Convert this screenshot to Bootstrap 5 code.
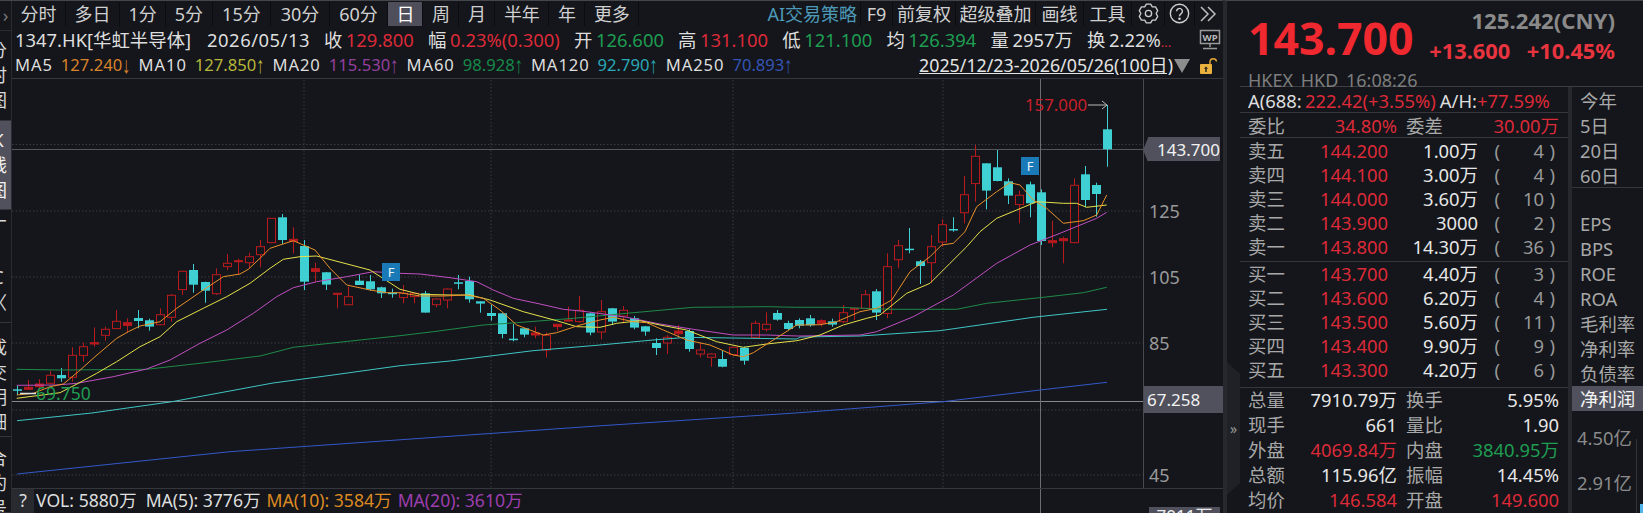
<!doctype html>
<html lang="zh">
<head>
<meta charset="utf-8">
<title>1347.HK 华虹半导体</title>
<link href="https://cdn.jsdelivr.net/npm/bootstrap@5.3.0/dist/css/bootstrap.min.css" rel="stylesheet">
<style>
:root{--bg:#14161b;--line:#35373d;--sep:#0b0c0f;--red:#dc2a38;--green:#1f9d52;--txt:#dedede;--mut:#a6a6a6;}
html,body{margin:0;height:513px;width:1643px;overflow:hidden;background:var(--bg);}
body{font-family:"Noto Sans","Noto Sans CJK SC",sans-serif;font-size:18.4px;line-height:1;color:var(--txt);}
.app{width:1643px;height:513px;overflow:hidden;}
.left-col{width:1223px;border-top:1px solid #44464c;}
.strip{width:12px;flex:none;border-right:1px solid #2a2c31;overflow:hidden;}
.strip-top{height:30px;border-bottom:1px solid #2a2c31;color:#777;}
.vtab{width:11px;overflow:hidden;border-bottom:1px solid #33353a;position:relative;color:#d8d8d8;font-size:18px;}
.vtab span{display:block;width:18px;margin-left:-11px;height:25px;line-height:25px;text-align:center;}
.vtab.on{background:#50515c;color:#f0f0f0;}
.v1{height:90px;padding-top:7px;} .v2{height:89px;padding-top:7px;} .v3{height:114px;padding-top:5px;} .v4{height:114px;padding-top:12px;} .v5{height:76px;padding-top:9px;}
.chart-col{width:1211px;}
.toolbar{height:26px;font-size:18px;}
.toolbar .tb{padding:0 8.5px;height:24px;line-height:24px;border-right:1px solid var(--sep);color:#d0d0d0;white-space:nowrap;}
.toolbar .tb.x{padding:0 9.5px;}
.toolbar .tb.on{background:#4e4f5a;color:#fff;padding:0 8px;}
.toolbar .tb.ai{color:#4c9ab8;padding:0 3px 0 0;}
.toolbar .tb.tr{padding:0;text-align:center;}
.t32{width:32px;} .t63{width:63px;} .t80{width:80px;} .t48{width:48px;} .t33{width:33px;} .t30{width:30px;} .t28{width:28px;}
.toolbar .tb.ic{padding:0;justify-content:center;}
.info{height:27px;white-space:nowrap;padding-left:3px;}
.info .g{margin-right:14.2px;}
.info b{font-weight:400;margin-left:3.5px;}
.info .date{letter-spacing:.5px;margin-right:14px;}
.mrow{height:26px;border-bottom:1px solid var(--line);font-size:16.6px;white-space:nowrap;padding-left:3px;}
.mrow .n{letter-spacing:.9px;}
.mrow .v{margin:0 8px;}
.ar{font-family:"Liberation Sans",sans-serif;display:inline-block;transform:scaleY(1.4);}
.range{font-size:17.8px;text-decoration:underline;color:#e4e4e4;}
.chart{height:409px;position:relative;}
.chart svg{display:block;}
.chart text{font-family:"Noto Sans","Noto Sans CJK SC",sans-serif;}
.pbadge{position:absolute;background:#50515c;color:#f2f2f2;display:flex;align-items:center;font-size:17px;}
.vol{height:25px;position:relative;border-top:1px solid var(--line);font-size:17.6px;white-space:nowrap;}
.vol .q{width:22px;background:#282a2f;height:24px;color:#ddd;}
.vol .vt{margin-left:2px;}
.vol .vg{margin-left:6px;}
.cross{position:absolute;left:1028px;top:0;bottom:0;width:1px;background:#6c6d72;}
.vbadge{position:absolute;left:1137px;width:71px;top:18px;height:10px;background:#50515c;color:#eee;text-align:center;font-size:17px;overflow:hidden;}
.right{width:420px;border-left:4px solid #26282d;border-top:1px solid #44464c;}
.handle-col{width:13px;flex:none;position:relative;}
.handle{position:absolute;left:0;top:361px;width:13px;height:133px;background:#1f2126;clip-path:polygon(0 0,100% 9%,100% 91%,0 100%);color:#9a9a9a;font-size:14px;}
.quote{width:403px;}
.head{height:86px;border-bottom:1px solid #3c3e44;padding-left:8px;}
.big{font-size:44.6px;font-weight:700;color:#f0282f;line-height:44px;margin-top:15px;}
.head-r{padding-right:28px;padding-top:9px;font-weight:700;}
.cny{font-size:22.2px;color:#8a8a8a;}
.chg{font-size:21.8px;color:#e8343f;margin-top:8px;word-spacing:11px;}
.ex{font-size:18px;color:#7e7e7e;height:20px;line-height:28px;margin-top:auto;word-spacing:3px;white-space:nowrap;}
.book{width:332px;flex:none;border-right:4px solid #26282d;}
.a-row{height:26px;border-bottom:1px solid var(--line);padding-left:8px;padding-top:3px;white-space:nowrap;font-size:18.4px;}
.a-row .clip{width:57px;overflow:hidden;flex:none;}
.stat{display:grid;grid-template-columns:60px 89px 9px 52px 101px;padding-left:8px;align-items:center;height:25px;}
.stat>:nth-child(2){text-align:right;}
.stat>:nth-child(4){grid-column:4;}
.stat>:nth-child(5){text-align:right;}
.lb{color:#a8a8a8;}
.bk{display:grid;grid-template-columns:60px 80px 90px 22px 44px 11px;padding-left:8px;align-items:center;height:24px;}
.bk>:nth-child(2),.bk>:nth-child(3),.bk>:nth-child(5),.bk>:nth-child(6){text-align:right;}
.bk>:nth-child(4),.bk>:nth-child(5),.bk>:nth-child(6){color:#999;}
.bk>:nth-child(4){text-align:right;}
.red{color:var(--red);} .green{color:var(--green);} .w{color:#e6e6e6;}
.sec{border-bottom:1px solid var(--line);}
.wei{height:25px;padding-top:3px;}
.s5{height:124px;padding-top:1px;}
.b5{height:126px;}
.side{width:71px;flex:none;color:#a8a8a8;position:relative;}
.side .it{height:25px;line-height:25px;padding-left:8px;white-space:nowrap;}
.side .it.on{background:#50515c;color:#f4f4f4;}
.side .top{padding-top:1px;height:101px;border-bottom:1px solid var(--line);margin-bottom:23px;}
.side .yi{color:#8a8a8a;padding-left:5px;height:45px;line-height:45px;}
.yaxis{position:absolute;left:64px;top:352px;bottom:0;width:1px;background:#33353a;}
.tick{position:absolute;right:0;bottom:0;width:3px;height:9px;background:#4fb4ea;}
.wp{margin-right:2px;}
</style>
</head>
<body>
<div class="app d-flex">
  <div class="left-col d-flex">
    <div class="strip d-flex flex-column">
      <div class="strip-top d-flex align-items-center justify-content-center">›</div>
      <div class="vtab v1"><span>分</span><span>时</span><span>图</span></div>
      <div class="vtab v2 on"><span>K</span><span>线</span><span>图</span></div>
      <div class="vtab v3"><span>丁</span><span>&nbsp;</span><span>C</span><span>〈</span></div>
      <div class="vtab v4"><span>成</span><span>交</span><span>明</span><span>细</span></div>
      <div class="vtab v5"><span>合</span><span>约</span><span>号</span></div>
    </div>
    <div class="chart-col d-flex flex-column">
      <div class="toolbar d-flex align-items-center">
        <div class="tb">分时</div><div class="tb">多日</div><div class="tb">1分</div><div class="tb">5分</div><div class="tb x">15分</div><div class="tb x">30分</div><div class="tb x">60分</div><div class="tb on">日</div><div class="tb">周</div><div class="tb">月</div><div class="tb">半年</div><div class="tb">年</div><div class="tb">更多</div>
        <div class="tb ai ms-auto">AI交易策略</div><div class="tb tr t32">F9</div><div class="tb tr t63">前复权</div><div class="tb tr t80">超级叠加</div><div class="tb tr t48">画线</div><div class="tb tr t48">工具</div>
        <div class="tb ic t33 d-flex align-items-center">
          <svg width="21" height="21" viewBox="0 0 24 24" fill="none" stroke="#cfcfcf" stroke-width="1.500" stroke-linejoin="round"><circle cx="12" cy="12" r="3.600"/><path d="M14.470 1.280L16.350 4.470 20.040 4.500 22.520 8.780 20.700 12 22.520 15.220 20.040 19.500 16.350 19.530 14.470 22.720 9.530 22.720 7.650 19.530 3.960 19.500 1.480 15.220 3.300 12 1.480 8.780 3.960 4.500 7.650 4.470 9.530 1.280z"/></svg>
        </div>
        <div class="tb ic t30 d-flex align-items-center">
          <svg width="21" height="21" viewBox="0 0 24 24" fill="none" stroke="#cfcfcf" stroke-width="1.600"><circle cx="12" cy="12" r="10.500"/><path d="M8.700 9.500a3.300 3.300 0 1 1 5.200 2.700c-1.300.9-1.900 1.500-1.900 3"/><circle cx="12" cy="18" r=".7" fill="#cfcfcf"/></svg>
        </div>
        <div class="tb ic t28 d-flex align-items-center border-0">
          <svg width="18" height="16" viewBox="0 0 18 16" fill="none" stroke="#bdbdbd" stroke-width="1.500"><path d="M1 1l7 7-7 7M8 1l7 7-7 7"/></svg>
        </div>
      </div>
      <div class="info d-flex align-items-center">
        <span class="g" style="margin-right:16px">1347.HK[华虹半导体]</span><span class="g date">2026/05/13</span>
        <span class="g">收<b class="red">129.800</b></span><span class="g">幅<b class="red">0.23%(0.300)</b></span><span class="g">开<b class="green">126.600</b></span><span class="g">高<b class="red">131.100</b></span><span class="g">低<b class="green">121.100</b></span><span class="g">均<b class="green">126.394</b></span><span class="g">量<b>2957万</b></span><span>换<b>2.22%</b><span class="red" style="font-size:13px">...</span></span>
        <svg class="ms-auto wp" width="22" height="22" viewBox="0 0 22 22"><rect x="1.500" y="1.500" width="19" height="13" fill="none" stroke="#9a9a9a" stroke-width="1.500"/><text x="11" y="12" text-anchor="middle" font-size="9.500" font-weight="700" fill="#b8b8b8" font-family="Noto Sans">WP</text><path d="M11 15v3M4 19.500h14" stroke="#9a9a9a" stroke-width="1.500"/></svg>
      </div>
      <div class="mrow d-flex align-items-center">
        <span class="n">MA5</span><span class="v" style="color:#d9832a">127.240<span class="ar">↓</span></span>
        <span class="n">MA10</span><span class="v" style="color:#b8b83a">127.850<span class="ar">↑</span></span>
        <span class="n">MA20</span><span class="v" style="color:#93409f">115.530<span class="ar">↑</span></span>
        <span class="n">MA60</span><span class="v" style="color:#178a4a">98.928<span class="ar">↑</span></span>
        <span class="n">MA120</span><span class="v" style="color:#2aa8b8">92.790<span class="ar">↑</span></span>
        <span class="n">MA250</span><span class="v" style="color:#3555b5">70.893<span class="ar">↑</span></span>
        <span class="range ms-auto">2025/12/23-2026/05/26(100日)</span>
        <svg width="18" height="16" viewBox="0 0 18 16"><path d="M1 1h16L9 15z" fill="#8d8d8d"/></svg>
        <svg class="ms-2 me-1" width="20" height="20" viewBox="0 0 20 20"><path d="M11 8V5.500a3.300 3.300 0 0 1 6.500 0" fill="none" stroke="#e6a83a" stroke-width="1.400"/><rect x="1" y="8" width="12" height="10" rx="1" fill="#eab13c"/><path d="M7 10.500l-2 2.300h1.300V16h1.400v-3.200H9z" fill="#222"/></svg>
      </div>
      <div class="chart" id="chart">
        <div class="pbadge" style="left:1136px;top:58px;width:72px;height:24px;padding-left:9px;">143.700</div>
        <div class="pbadge" style="left:1132px;top:307px;width:79px;height:27px;padding-left:3px;">67.258</div>
      </div>
      <div class="vol d-flex align-items-center">
        <div class="q d-flex align-items-center justify-content-center">?</div>
        <span class="vt">VOL: 5880万&nbsp; MA(5): 3776万</span>
        <span class="vg" style="color:#dd8a22">MA(10): 3584万</span>
        <span class="vg" style="color:#9d3eae">MA(20): 3610万</span>
        <div class="cross"></div>
        <div class="vbadge">7011万</div>
      </div>
    </div>
  </div>
  <div class="right d-flex">
    <div class="handle-col"><div class="handle d-flex align-items-center justify-content-center">»</div></div>
    <div class="quote d-flex flex-column">
      <div class="head d-flex flex-column">
        <div class="d-flex">
          <div class="big">143.700</div>
          <div class="head-r ms-auto text-end">
            <div class="cny">125.242(CNY)</div>
            <div class="chg">+13.600 +10.45%</div>
          </div>
        </div>
        <div class="ex">HKEX HKD 16:08:26</div>
      </div>
      <div class="d-flex flex-grow-1">
        <div class="book">
          <div class="a-row d-flex align-items-center"><span class="clip">A(688:</span><span class="red">222.42(+3.55%)</span><span class="ms-1">A/H:</span><span class="red">+77.59%</span></div>
          <div class="stat sec wei"><span class="lb">委比</span><span class="red">34.80%</span><span></span><span class="lb">委差</span><span class="red">30.00万</span></div>
          <div class="sec s5">
            <div class="bk"><span class="lb">卖五</span><span class="red">144.200</span><span class="w">1.00万</span><span>(</span><span>4</span><span>)</span></div>
            <div class="bk"><span class="lb">卖四</span><span class="red">144.100</span><span class="w">3.00万</span><span>(</span><span>4</span><span>)</span></div>
            <div class="bk"><span class="lb">卖三</span><span class="red">144.000</span><span class="w">3.60万</span><span>(</span><span>10</span><span>)</span></div>
            <div class="bk"><span class="lb">卖二</span><span class="red">143.900</span><span class="w">3000</span><span>(</span><span>2</span><span>)</span></div>
            <div class="bk"><span class="lb">卖一</span><span class="red">143.800</span><span class="w">14.30万</span><span>(</span><span>36</span><span>)</span></div>
          </div>
          <div class="sec b5">
            <div class="bk"><span class="lb">买一</span><span class="red">143.700</span><span class="w">4.40万</span><span>(</span><span>3</span><span>)</span></div>
            <div class="bk"><span class="lb">买二</span><span class="red">143.600</span><span class="w">6.20万</span><span>(</span><span>4</span><span>)</span></div>
            <div class="bk"><span class="lb">买三</span><span class="red">143.500</span><span class="w">5.60万</span><span>(</span><span>11</span><span>)</span></div>
            <div class="bk"><span class="lb">买四</span><span class="red">143.400</span><span class="w">9.90万</span><span>(</span><span>9</span><span>)</span></div>
            <div class="bk"><span class="lb">买五</span><span class="red">143.300</span><span class="w">4.20万</span><span>(</span><span>6</span><span>)</span></div>
          </div>
          <div class="stat"><span class="lb">总量</span><span class="w">7910.79万</span><span></span><span class="lb">换手</span><span class="w">5.95%</span></div>
          <div class="stat"><span class="lb">现手</span><span class="w">661</span><span></span><span class="lb">量比</span><span class="w">1.90</span></div>
          <div class="stat"><span class="lb">外盘</span><span class="red">4069.84万</span><span></span><span class="lb">内盘</span><span class="green">3840.95万</span></div>
          <div class="stat"><span class="lb">总额</span><span class="w">115.96亿</span><span></span><span class="lb">振幅</span><span class="w">14.45%</span></div>
          <div class="stat"><span class="lb">均价</span><span class="red">146.584</span><span></span><span class="lb">开盘</span><span class="red">149.600</span></div>
        </div>
        <div class="side">
          <div class="top">
            <div class="it">今年</div><div class="it">5日</div><div class="it">20日</div><div class="it">60日</div>
          </div>
          <div class="it">EPS</div><div class="it">BPS</div><div class="it">ROE</div><div class="it">ROA</div><div class="it">毛利率</div><div class="it">净利率</div><div class="it">负债率</div><div class="it on">净利润</div>
          <div class="yi mt-1">4.50亿</div><div class="yi">2.91亿</div>
          <div class="yaxis"></div><div class="tick"></div>
        </div>
      </div>
    </div>
  </div>
</div>
<script>
// candle data as read from the picture: kind, wick top, body top, body bottom, wick bottom
const X=i=>17.33+11.01*i;
const conv=(a,off)=>a.map(c=>[c[0],off+c[1]/3,off+c[2]/3,off+c[3]/3,off+c[4]/3]);
const A=conv([["c",858,868,872,885],["r",840,862,868,870],["r",838,852,860,865],["r",812,826,850,850],["c",804,825,835,845],["r",742,766,832,845],["r",728,740,766,785],["r",682,728,732,740],["r",680,688,706,722],["r",630,664,686,688],["r",655,668,676,698],["c",630,654,663,685],["c",656,661,680,692],["r",625,644,674,676],["r",582,586,652,665],["r",512,514,569,585],["c",492,510,554,578],["c",545,546,572,608],["r",505,524,581,585],["r",462,490,500,510],["r",476,482,484,522],["r",458,470,488,505],["r",420,440,464,502],["r",355,355,428,430],["c",342,352,420,432],["r",382,418,424,460],["c",420,438,545,570],["r",488,506,514,545],["c",516,517,554,570],["r",580,580,583,625],["r",560,590,614,616],["c",525,542,555,555],["c",525,544,568,572],["c",560,562,580,594],["c",566,578,580,593]],100);
const B=conv([["r",165,190,203,220],["r",190,190,200,220],["c",183,190,248,248],["r",205,207,224,232],["r",175,177,210,235],["c",135,157,159,178],["c",140,153,208,218],["c",214,214,221,248],["c",224,249,258,272],["c",250,250,312,325],["c",282,326,328,334],["c",295,295,314,322],["r",290,309,315,325],["r",308,316,360,383],["r",282,283,290,302],["r",230,270,272,272],["r",198,241,275,278],["c",248,250,308,316],["r",210,245,306,328],["c",234,235,275,285],["r",228,241,258,280],["c",258,265,293,298],["c",288,289,305,317],["c",325,339,354,375],["r",315,322,339,372],["r",285,303,311,320],["c",298,303,357,365],["r",338,360,372,382],["r",370,372,382,410],["c",362,387,410,412],["r",350,352,374,378],["c",350,353,392,404],["r",272,280,322,324],["r",247,283,298,305],["c",240,249,269,272],["c",272,279,297,300],["c",265,270,287,295]],230);
const C=conv([["c",675,685,706,710],["r",688,692,700,710],["c",686,694,704,710],["r",645,668,695,700],["r",655,655,657,690],["r",600,614,655,655],["c",597,604,668,690],["r",490,530,670,685],["r",450,467,509,535],["c",414,476,478,490],["c",510,514,528,582],["r",435,470,518,578],["r",388,404,456,470],["c",382,417,419,425],["r",258,314,368,400],["r",165,199,281,335],["c",220,220,302,358],["c",180,232,273,274],["c",265,274,317,342],["r",302,316,344,400],["c",275,283,340,382],["c",298,307,453,465],["r",392,452,458,472],["r",440,446,452,520],["r",265,286,458,460],["c",228,253,330,352],["c",278,285,312,380],["c",45,118,178,230]],90);
const candles=[...A,...B,...C];
const mapA=p=>[p[0]/3,100+p[1]/3],mapB=p=>[400+p[0]/3,230+p[1]/3],mapC=p=>[800+p[0]/3,90+p[1]/3];
const line=(a,b,c,extra=[])=>[...a.map(mapA),...b.map(mapB),...c.map(mapC),...extra].map(p=>p[0].toFixed(1)+","+p[1].toFixed(1)).join(" ");
const ma5=line([[50,885],[100,880],[150,860],[190,852],[235,815],[285,770],[350,715],[385,695],[420,678],[480,665],[530,625],[610,570],[670,530],[720,522],[745,508],[780,475],[810,445],[880,422],[945,450],[990,505],[1040,555],[1110,570],[1160,578]],[[0,188],[60,198],[130,198],[200,195],[250,205],[300,240],[350,285],[430,315],[470,308],[540,285],[600,270],[640,262],[700,275],[740,278],[790,300],[860,330],[930,345],[1000,375],[1030,380],[1060,368],[1120,330],[1190,285]],[[0,705],[60,704],[110,695],[180,665],[230,655],[275,630],[330,545],[390,500],[425,465],[460,460],[495,425],[530,350],[590,305],[630,278],[660,285],[700,330],[740,355],[790,400],[850,392],[890,375],[920,315]]);
const ma10=line([[50,895],[180,878],[235,850],[290,820],[350,785],[420,740],[480,710],[530,665],[610,625],[680,590],[750,550],[810,505],[850,478],[900,470],[950,468],[1110,510]],[[0,178],[60,193],[150,195],[210,195],[270,210],[370,245],[470,272],[530,290],[600,292],[650,280],[720,272],[780,285],[860,300],[950,335],[1030,352],[1100,342],[1190,332]],[[0,750],[60,735],[130,705],[200,685],[240,675],[320,610],[390,580],[450,520],[500,470],[540,425],[590,385],[650,360],[710,335],[790,340],[830,340],[860,352],[920,345]]);
const ma20=line([[50,856],[170,855],[230,850],[340,830],[440,807],[510,780],[600,730],[680,690],[760,640],[830,590],[880,563],[950,545],[1040,530],[1120,515]],[[0,130],[60,132],[150,143],[230,155],[280,180],[340,205],[420,222],[490,238],[560,245],[680,262],[780,282],[880,298],[1000,315],[1100,315],[1195,318]],[[0,738],[180,735],[230,725],[340,680],[460,615],[590,520],[690,465],[780,430],[890,385],[920,367]]);
const ma60=line([[50,808],[180,810],[440,808],[600,790],[780,768],[880,742],[1080,720]],[[0,317],[100,305],[250,285],[350,278],[520,265],[700,248],[880,232],[1100,230],[1190,232]],[[0,652],[115,652],[270,658],[470,658],[560,640],[730,622],[850,608],[920,592]]);
const pts=s=>s.map(p=>p.join(",")).join(" ");
const ma120=pts([[17,420.7],[92,413],[172,401.7],[273,383],[333,375],[400,365.7],[450,361],[533,350.7],[600,345],[653,340],[687,337.300],[797,339],[800,337],[860,336],[940,330.700],[1033,317.300],[1107,309.300]]);
const ma250=pts([[17,474],[230,451.7],[597,426],[800,412.700],[943,401.700],[1040,390],[1107,382.300]]);
let s='<svg width="1211" height="409" viewBox="12 79 1211 409" xmlns="http://www.w3.org/2000/svg">';
[144.5,211,277,343,410,475].forEach(y=>s+=`<line x1="12" y1="${y}" x2="1143" y2="${y}" stroke="#383a40" stroke-dasharray="1.500 2"/>`);
[304,491,733,943].forEach(x=>s+=`<line x1="${x}" y1="80" x2="${x}" y2="488" stroke="#383a40" stroke-dasharray="1.500 2"/>`);
s+='<line x1="12" y1="149.500" x2="1143" y2="149.500" stroke="#56575c"/>';
s+='<line x1="12" y1="401.500" x2="1143" y2="401.500" stroke="#87888c"/>';
s+='<line x1="1143.500" y1="79" x2="1143.500" y2="488" stroke="#4a4b50"/>';
s+='<line x1="1040.500" y1="79" x2="1040.500" y2="488" stroke="#6c6d72"/>';
candles.forEach((c,i)=>{const x=X(i),red=c[0]==="r",col=red?"#b81a1e":"#3fd0d4",h=c[3]-c[2];
 const xx=Math.round(x)+.5;
 if(red){
  s+=`<line x1="${xx}" x2="${xx}" y1="${c[1].toFixed(1)}" y2="${c[2].toFixed(1)}" stroke="${col}"/><line x1="${xx}" x2="${xx}" y1="${c[3].toFixed(1)}" y2="${c[4].toFixed(1)}" stroke="${col}"/>`;
  s+=`<rect x="${xx-4}" y="${c[2].toFixed(1)}" width="8" height="${Math.max(h,1).toFixed(1)}" fill="${h<3?col:'#14161b'}" stroke="${col}"/>`;
 }else{
  s+=`<line x1="${xx}" x2="${xx}" y1="${c[1].toFixed(1)}" y2="${c[4].toFixed(1)}" stroke="${col}"/>`;
  s+=`<rect x="${xx-4.5}" y="${c[2].toFixed(1)}" width="9" height="${Math.max(h,1.500).toFixed(1)}" fill="${col}"/>`;
 }});
[[ma250,"#3458c8"],[ma120,"#3fc5c5"],[ma60,"#1f8a47"],[ma20,"#bf4fc0"],[ma10,"#e6e04a"],[ma5,"#e8902a"]].forEach(l=>s+=`<polyline points="${l[0]}" fill="none" stroke="${l[1]}" stroke-width="1"/>`);
[[382,263],[1021,157]].forEach(f=>{s+=`<rect x="${f[0]}" y="${f[1]}" width="18" height="18" fill="#1a7ab8"/><text x="${f[0]+9}" y="${f[1]+14}" text-anchor="middle" font-size="13" fill="#e8f2f8">F</text>`;});
s+='<text x="1025" y="111" font-size="16.800" fill="#c8202a">157.000</text><path d="M1088 105h19M1102 101l5 4-5 4" fill="none" stroke="#b8b8b8"/>';
s+='<text x="36" y="399.500" font-size="17.500" fill="#1f9d52">69.750</text><line x1="20" y1="393.500" x2="36" y2="393.500" stroke="#ddd" stroke-width="1.500"/>';
[[125,211],[105,277],[85,343],[45,475]].forEach(a=>s+=`<text x="1149" y="${a[1]+6.500}" font-size="18" fill="#9a9a9a">${a[0]}</text>`);
s+='<path d="M1148 138l-5 12 5 12z" fill="#50515c"/>';
s+='</svg>';
document.getElementById('chart').insertAdjacentHTML('afterbegin',s);
</script>
<script src="https://cdn.jsdelivr.net/npm/bootstrap@5.3.0/dist/js/bootstrap.bundle.min.js"></script>
</body>
</html>
